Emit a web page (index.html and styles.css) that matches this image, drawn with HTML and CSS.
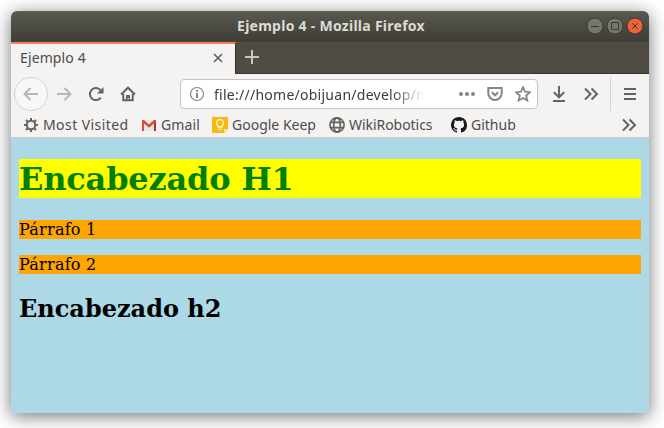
FILE: index.html
```html
<!DOCTYPE html>
<html lang="es">
<head>
<meta charset="utf-8">
<title>Ejemplo 4</title>
<link rel="stylesheet" href="styles.css">
</head>
<body>
<div class="window">
  <header class="titlebar">
    <span class="title">Ejemplo 4 - Mozilla Firefox</span>
    <div class="controls">
      <svg class="control" viewBox="0 0 18 18"><circle cx="9" cy="9" r="8"/><path d="M5 9.5h8"/></svg>
      <svg class="control" viewBox="0 0 18 18"><circle cx="9" cy="9" r="8"/><path d="M5.5 5.5h7v7h-7z"/></svg>
      <svg class="control close" viewBox="0 0 18 18"><circle cx="9" cy="9" r="8"/><path d="M6.2 6.2l5.6 5.6M11.8 6.2l-5.6 5.6"/></svg>
    </div>
  </header>
  <div class="tabs">
    <div class="tab"><span class="tab-name">Ejemplo 4</span>
      <svg class="tab-close" viewBox="0 0 10 10"><path d="M1 1l8 8M9 1l-8 8"/></svg>
    </div>
    <svg class="plus" viewBox="0 0 14 14"><path d="M7 0v14M0 7h14"/></svg>
  </div>
  <nav class="toolbar">
    <span class="back"><svg class="icon pale" viewBox="0 0 16 16"><path d="M15 8H1.5M7.5 2l-6 6 6 6"/></svg></span>
    <svg class="icon pale forward" viewBox="0 0 16 16"><path d="M1 8h13.500M8.500 2l6 6-6 6"/></svg>
    <svg class="icon reload" viewBox="0 0 16 16"><path d="M12.800 11.600A6 6 0 1 1 12.500 4.200"/><path class="fill" d="M15.500 1v6.500H9z"/></svg>
    <svg class="icon home" viewBox="0 0 16 16"><path d="M1 8.500L8 1.700l7 6.800M3.300 8v6.200h9.400V8"/><path class="fill" d="M6 14V9h4v5H8.800v-2H7.600v2z"/></svg>
    <div class="urlbar">
      <svg class="icon info" viewBox="0 0 16 16"><circle cx="8" cy="8" r="6.500"/><path class="info-mark" d="M8 7v5M8 4v1.700"/></svg>
      <span class="url">file:///home/obijuan/develop/n</span>
      <svg class="icon grey dots" viewBox="0 0 16 16"><circle cx="2" cy="8" r="2"/><circle cx="8" cy="8" r="2"/><circle cx="14" cy="8" r="2"/></svg>
      <svg class="icon grey pocket" viewBox="0 0 16 16"><path d="M1.300 2h13.400v5.300a6.700 6.700 0 0 1-13.400 0zM4.800 6.200L8 9.300l3.200-3.100"/></svg>
      <svg class="icon grey star" viewBox="0 0 16 16"><path d="M8 1.200l2 4.500 4.900.5-3.700 3.400 1.100 4.900L8 12l-4.300 2.500 1.100-4.900L1.100 6.200 6 5.700z"/></svg>
    </div>
    <svg class="icon download" viewBox="0 0 16 16"><path d="M8 0v11M2.800 6.200L8 11.300l5.200-5.100M2 15h12"/></svg>
    <svg class="icon overflow" viewBox="0 0 16 16"><path d="M2 2.500L7.500 8 2 13.500M8.500 2.500L14 8l-5.500 5.500"/></svg>
    <span class="menu"><svg class="icon" viewBox="0 0 16 16"><path d="M2 3h12M2 8h12M2 13h12"/></svg></span>
  </nav>
  <div class="bookmarks">
    <div class="bookmark visited">
      <svg class="icon" viewBox="0 0 16 16"><circle cx="8" cy="8" r="4.200"/><path d="M8 1v2.500M8 12.500V15M1 8h2.500M12.500 8H15M3 3l1.800 1.800M11.200 11.200L13 13M13 3l-1.800 1.800M4.800 11.200L3 13"/></svg>
      <span>Most Visited</span>
    </div>
    <div class="bookmark gmail">
      <svg class="mark" viewBox="0 0 16 16"><path fill="#e7e5e3" d="M1 3h14v11H1z"/><path fill="#d54b3d" d="M1 3h2l5 4.500L13 3h2v11h-2V6.500l-5 4.200-5-4.200V14H1z"/><path fill="#b93229" d="M13 6.500L15 4v10h-2z"/></svg>
      <span>Gmail</span>
    </div>
    <div class="bookmark keep">
      <svg class="mark" viewBox="0 0 16 16"><path fill="#f5b912" d="M0 0h16v12l-4 4H0z"/><path fill="#fbe09a" d="M12 16v-4h4z"/><path fill="none" stroke="#fff3cf" stroke-width="1.300" d="M6.200 10c0-1.500-1.700-1.800-1.700-4a3.500 3.500 0 0 1 7 0c0 2.200-1.700 2.500-1.700 4zM6.200 12.300h3.600"/></svg>
      <span>Google Keep</span>
    </div>
    <div class="bookmark wiki">
      <svg class="icon globe" viewBox="0 0 16 16"><circle cx="8" cy="8" r="7.100"/><ellipse cx="8" cy="8" rx="3.300" ry="7.100"/><path d="M1.800 5.300h12.400M1.800 10.700h12.400"/></svg>
      <span>WikiRobotics</span>
    </div>
    <div class="bookmark github">
      <svg class="mark" viewBox="0 0 16 16"><path fill="#191717" d="M8 0C3.580 0 0 3.580 0 8c0 3.540 2.290 6.530 5.470 7.590.4.070.55-.17.55-.38 0-.19-.01-.82-.01-1.490-2.010.37-2.530-.49-2.690-.94-.09-.23-.48-.94-.82-1.130-.28-.15-.68-.52-.01-.53.63-.01 1.080.58 1.230.82.72 1.210 1.870.87 2.330.66.070-.52.28-.87.51-1.070-1.780-.2-3.640-.89-3.640-3.950 0-.87.31-1.590.82-2.150-.08-.2-.36-1.020.08-2.120 0 0 .67-.21 2.200.82.64-.18 1.320-.27 2-.27s1.360.09 2 .27c1.530-1.040 2.200-.82 2.200-.82.44 1.100.16 1.920.08 2.120.51.56.82 1.270.82 2.150 0 3.070-1.870 3.750-3.650 3.950.29.25.54.73.54 1.480 0 1.070-.01 1.930-.01 2.200 0 .21.15.46.55.38A8 8 0 0 0 16 8c0-4.420-3.580-8-8-8z"/></svg>
      <span>Github</span>
    </div>
    <svg class="icon more" viewBox="0 0 16 16"><path d="M2 2.500L7.500 8 2 13.500M8.500 2.500L14 8l-5.500 5.500"/></svg>
  </div>
  <main class="page">
    <h1>Encabezado H1</h1>
    <p>Párrafo 1</p>
    <p>Párrafo 2</p>
    <h2>Encabezado h2</h2>
  </main>
</div>
</body>
</html>
```
FILE: styles.css
```css
* { box-sizing: border-box; }

body {
  margin: 0;
  padding: 11px;
  width: 664px;
  height: 428px;
  overflow: hidden;
  background: #fff;
  font-family: "Noto Sans", sans-serif;
}

.window {
  width: 638px;
  height: 402px;
  display: flex;
  flex-direction: column;
  overflow: hidden;
  border-radius: 6px 6px 0 0;
  box-shadow: 0 3px 18px rgba(0, 0, 0, 0.55);
}

svg { display: block; flex: none; }

.titlebar {
  height: 30px;
  flex: none;
  display: grid;
  grid-template-columns: 60px 1fr 60px;
  align-items: center;
  padding: 0 3px 0 5px;
  background: linear-gradient(#595850, #3e3d38);
  border-top: 1px solid #646259;
}

.title {
  grid-column: 2;
  padding-bottom: 2px;
  text-align: center;
  color: #dfdbd2;
  font-size: 14px;
  font-weight: 700;
  line-height: 20px;
  letter-spacing: 0.27px;
  white-space: nowrap;
}

.controls { display: flex; gap: 2px; }

.control {
  width: 18px;
  height: 18px;
  margin-bottom: 1px;
  fill: #76756e;
  stroke: #3a3934;
}

.control path { fill: none; }
.close { fill: #ee6237; }

.tabs {
  height: 33px;
  flex: none;
  display: flex;
  align-items: center;
  background: #504c44;
  border-bottom: 1px solid #37342f;
  border-top: 1px solid #45423b;
}

.tab {
  width: 225px;
  height: 32px;
  flex: none;
  align-self: flex-start;
  display: flex;
  align-items: center;
  justify-content: space-between;
  padding: 0 12px 0 9px;
  background: #f4f3f1;
  border-top: 2px solid #f58057;
  border-right: 1px solid #37342f;
}

.tab-name {
  padding-bottom: 3px;
  color: #4c4c4c;
  font-size: 14px;
  letter-spacing: 0.12px;
}

.tab-close {
  width: 10px;
  height: 10px;
  margin-bottom: 2px;
  stroke: #5b5b59;
  stroke-width: 1.5;
}

.plus {
  width: 14px;
  height: 14px;
  margin: 0 0 1px 9px;
  stroke: #c9c6be;
  stroke-width: 2;
}

.toolbar {
  height: 40px;
  flex: none;
  display: flex;
  align-items: center;
  padding-left: 3px;
  background: #f4f3f1;
}

.icon {
  width: 16px;
  height: 16px;
  fill: none;
  stroke: #636361;
  stroke-width: 2;
}

.icon .fill { fill: #636361; stroke: none; }
.icon.pale { stroke: #b7b6b4; }
.icon.grey { stroke: #858584; }

.back {
  width: 34px;
  height: 34px;
  display: grid;
  place-items: center;
  background: #f8f7f5;
  border: 1px solid #d5d4d1;
  border-radius: 50%;
}

.forward { margin-left: 8px; }
.reload { margin-left: 16px; }
.home { margin-left: 16px; }

.urlbar {
  width: 358px;
  height: 30px;
  margin-left: 44px;
  padding-left: 8px;
  display: flex;
  align-items: center;
  background: #fff;
  border: 1px solid #c5c3c0;
  border-radius: 4px;
}

.icon.info { stroke: #858584; stroke-width: 1.2; }
.icon .info-mark { stroke-width: 2; }

.url {
  width: 210px;
  margin-left: 9px;
  overflow: hidden;
  color: #3c3c3c;
  font-size: 14px;
  letter-spacing: 0.26px;
  white-space: nowrap;
  -webkit-mask-image: linear-gradient(to right, #000 178px, transparent 210px);
  mask-image: linear-gradient(to right, #000 178px, transparent 210px);
}

.icon.dots { margin-left: 35px; fill: #858584; stroke: none; }
.pocket { margin-left: 12px; }
.star { margin-left: 12px; }
.icon.star { stroke-width: 1.8; }
.download { margin-left: 13px; }
.overflow { margin-left: 16px; }

.menu {
  height: 34px;
  margin-left: 11px;
  padding-left: 11px;
  display: flex;
  align-items: center;
  border-left: 1px solid #d5d4d1;
}

.bookmarks {
  height: 24px;
  flex: none;
  display: flex;
  align-items: center;
  padding: 0 0 1px 12px;
  background: #f4f3f1;
  border-bottom: 1px solid #ccc9c7;
}

.bookmark {
  display: flex;
  align-items: center;
  gap: 4px;
  color: #4c4c4c;
  font-size: 14px;
  line-height: 20px;
  white-space: nowrap;
}

.bookmark span { padding-bottom: 1px; }

.mark { width: 16px; height: 16px; }
.visited { width: 118px; letter-spacing: 0.42px; }
.gmail { width: 71px; letter-spacing: 0.15px; }
.keep { width: 117px; }
.wiki { width: 122px; letter-spacing: -0.05px; }
.github { width: 170px; }
.icon.globe { stroke-width: 1.7; }

.page {
  flex: 1;
  padding: 21px 8px 0;
  background: lightblue;
  color: #000;
  font-family: "DejaVu Serif", serif;
  font-size: 16px;
}

h1 {
  height: 39px;
  margin: 0 0 22px;
  background: yellow;
  color: green;
  font-size: 32px;
  line-height: 41px;
  letter-spacing: -0.18px;
}

p {
  margin: 0 0 16px;
  background: orange;
  line-height: 19px;
  letter-spacing: 0.25px;
}

h2 {
  margin: 20px 0 0;
  font-size: 24px;
  line-height: 29px;
}
```
